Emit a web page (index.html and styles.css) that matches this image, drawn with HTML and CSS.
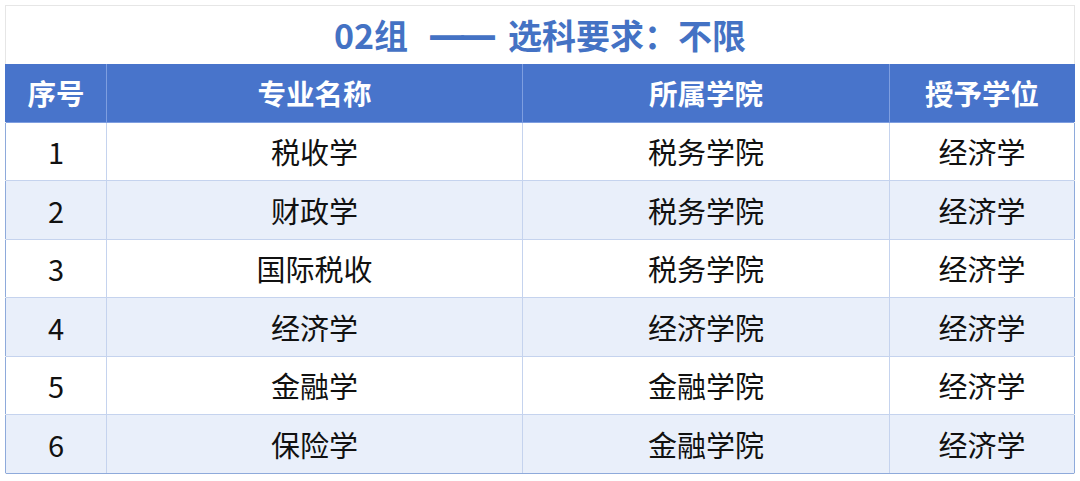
FILE: index.html
```html
<!DOCTYPE html>
<html lang="zh">
<head>
<meta charset="utf-8">
<link rel="stylesheet" href="styles.css">
</head>
<body>
<div class="sheet">
  <div class="title">02组<span class="dash">——</span>选科要求：不限</div>
  <div class="grid">
    <div class="row head"><div class="c">序号</div><div class="c">专业名称</div><div class="c">所属学院</div><div class="c">授予学位</div></div>
    <div class="row"><div class="c">1</div><div class="c">税收学</div><div class="c">税务学院</div><div class="c">经济学</div></div>
    <div class="row alt"><div class="c">2</div><div class="c">财政学</div><div class="c">税务学院</div><div class="c">经济学</div></div>
    <div class="row"><div class="c">3</div><div class="c">国际税收</div><div class="c">税务学院</div><div class="c">经济学</div></div>
    <div class="row alt"><div class="c">4</div><div class="c">经济学</div><div class="c">经济学院</div><div class="c">经济学</div></div>
    <div class="row"><div class="c">5</div><div class="c">金融学</div><div class="c">金融学院</div><div class="c">经济学</div></div>
    <div class="row alt last"><div class="c">6</div><div class="c">保险学</div><div class="c">金融学院</div><div class="c">经济学</div></div>
  </div>
</div>
</body>
</html>
```
FILE: styles.css
```css
html, body { margin: 0; padding: 0; background: #ffffff; }
body { padding: 5px 5px 0 5px; font-family: "Noto Sans CJK SC", "Noto Sans", sans-serif; }
.sheet { width: 1070px; border-top: 1px solid #e6e6e6; border-left: 1px solid #e6e6e6; border-right: 1px solid #e6e6e6; box-sizing: border-box; }
.title { height: 58px; display: flex; align-items: center; justify-content: center; color: #4472c4; font-weight: bold; font-size: 34px; line-height: 1; }
.dash { font-family: "DejaVu Sans", sans-serif; font-weight: bold; font-size: 38px; letter-spacing: -7px; margin: 0 18px 0 20px; }
.grid { display: flex; flex-direction: column; }
.row { display: grid; grid-template-columns: 100px 416px 367px 1fr; height: 58.5px; border-bottom: 1px solid #c5d3ee; box-sizing: border-box; background: #ffffff; }
.row.alt { background: #e9effa; }
.row.last { border-bottom: 1px solid #8eaadb; }
.c { display: flex; align-items: center; justify-content: center; font-size: 29px; color: #111; border-left: 1px solid #c5d3ee; }
.c:first-child { border-left: 1px solid #8eaadb; margin-left: -1px; }
.row .c:last-child { border-right: 1px solid #8eaadb; margin-right: -1px; }
.row.head { background: #4874cb; border-bottom: 1px solid #7e9ee0; }
.row.head .c { color: #fff; font-weight: bold; font-size: 28.5px; border-left-color: #7e9ee0; }
.row.head .c:first-child { border-left-color: #4874cb; }
.row.head .c:last-child { border-right-color: #4874cb; }
```
